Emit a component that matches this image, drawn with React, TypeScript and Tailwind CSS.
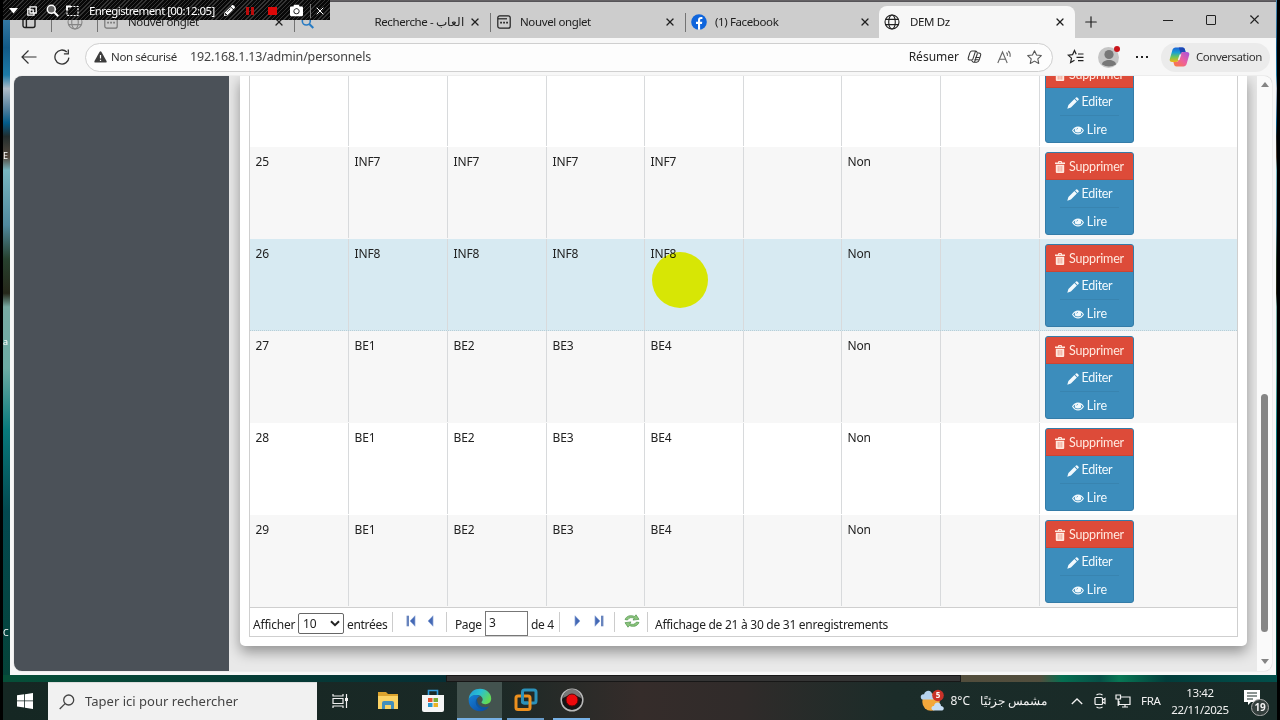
import type { ReactNode } from "react";
import { FaPencilAlt, FaCamera } from "react-icons/fa";
import { X, Plus } from "lucide-react";

const S = { fill: "none", stroke: "currentColor" } as const;

function GlobeIcon({ className = "" }: { className?: string }) {
  return (
    <svg className={className} width="16" height="16" viewBox="0 0 16 16" {...S} strokeWidth="1.1">
      <circle cx="8" cy="8" r="7" />
      <ellipse cx="8" cy="8" rx="3.3" ry="7" />
      <path d="M1.6 5.4h12.8M1.6 10.6h12.8" />
    </svg>
  );
}

function NewTabIcon({ className = "" }: { className?: string }) {
  return (
    <svg className={className} width="14" height="14" viewBox="0 0 14 14" {...S} strokeWidth="1.2">
      <rect x="0.8" y="0.8" width="12.4" height="12.4" rx="2" />
      <path d="M1 3.8h9" />
      <path d="M3.2 7.7h1.7M6.2 7.7h1.7M9.2 7.7h1.7" strokeWidth="1.7" />
    </svg>
  );
}

function FacebookIcon() {
  return (
    <svg width="16" height="16" viewBox="0 0 16 16">
      <circle cx="8" cy="8" r="7.8" fill="#0f65dc" />
      <path d="M7 15.7V10H5V7.8h2V6.2C7 4.1 8.2 3 10.1 3h1.3v2h-1c-1 0-1.3.5-1.3 1.2v1.6h2.2L10.9 10H9.1v5.7z" fill="#fff" />
    </svg>
  );
}

function Separator() {
  return <div className="h-[19px] w-px shrink-0 bg-[#737373]" />;
}

function Tab({ icon, label, width, labelClass = "pl-[2px]" }: { icon: ReactNode; label: string; width: string; labelClass?: string }) {
  return (
    <div className={`flex shrink-0 items-center ${width}`}>
      <div className="-ml-px flex w-[27px] shrink-0 items-center justify-center">{icon}</div>
      <div className={`grow whitespace-nowrap text-[11.5px] tracking-[-0.38px] ${labelClass}`}>{label}</div>
      <X size={12} strokeWidth={2.6} className="mr-[9px] shrink-0" />
    </div>
  );
}

function TabStrip() {
  return (
    <div className="flex h-[37px] items-end border-t border-[#565458] bg-[#cdcdcd] text-[#202020]">
      <div className="flex h-[32px] shrink-0 items-center">
        <div className="flex w-[41px] items-center justify-center pr-[4px]">
          <svg width="14" height="14" viewBox="0 0 14 14" {...S} strokeWidth="1.4">
            <rect x="1" y="1" width="12" height="11.5" rx="2" />
            <path d="M1 4h12M4.4 4v8" />
          </svg>
        </div>
        <Separator />
        <div className="flex w-[45px] items-center justify-center"><GlobeIcon className="text-[#858585]" /></div>
        <Separator />
        <Tab width="w-[196px]" icon={<NewTabIcon className="text-[#777]" />} label="Nouvel onglet" labelClass="pl-[4px]" />
        <Separator />
        <Tab
          width="w-[195px]"
          icon={<svg width="13" height="13" viewBox="0 0 13 13" fill="none" stroke="#287bc3" strokeWidth="1.6"><circle cx="5.3" cy="5" r="4" /><path d="M8.3 8l4 4" strokeWidth="2" /></svg>}
          label="Recherche - العاب"
          labelClass="text-right pr-[5px]"
        />
        <Separator />
        <Tab width="w-[194px]" icon={<NewTabIcon />} label="Nouvel onglet" labelClass="pl-[3px]" />
        <Separator />
        <Tab width="w-[194px]" icon={<FacebookIcon />} label="(1) Facebook" labelClass="pl-[3px]" />
      </div>
      <div className="-ml-px flex h-[32px] w-[196px] shrink-0 items-center rounded-t-lg bg-[#f7f7f7]">
        <Tab width="w-[196px]" icon={<GlobeIcon />} label="DEM Dz" labelClass="pl-[5px]" />
      </div>
      <div className="flex h-[32px] grow items-center">
        <Plus size={18} strokeWidth={1.6} className="ml-[7px]" />
        <div className="mb-[3px] ml-[63px] h-px w-[10px] bg-[#222]" />
        <div className="mb-[5px] ml-[33px] h-[10px] w-[10px] rounded-[1px] border border-[#222]" />
        <X size={15} strokeWidth={1.7} className="mb-[5px] ml-[31px]" />
      </div>
    </div>
  );
}

const STAR = "M8 1.6l1.9 4.1 4.5.5-3.3 3 .9 4.4L8 11.4l-4 2.2.9-4.4-3.3-3 4.5-.5z";

function CopilotIcon() {
  return (
    <svg width="21" height="20" viewBox="0 0 21 20">
      <defs>
        <linearGradient id="cp1" x1="0" y1="0" x2="0" y2="1">
          <stop offset="0" stopColor="#1c63d8" /><stop offset=".35" stopColor="#18a0d3" /><stop offset=".65" stopColor="#6cc65a" /><stop offset="1" stopColor="#f2b413" />
        </linearGradient>
        <linearGradient id="cp2" x1="1" y1="0" x2="0" y2="1">
          <stop offset="0" stopColor="#a352e0" /><stop offset=".5" stopColor="#ed5f9e" /><stop offset="1" stopColor="#fb7d35" />
        </linearGradient>
      </defs>
      <path d="M6.500.5h7c1.500 0 2 .8 2.400 2l.7 2.500h-2.500c-1.300 0-2 .7-2.400 2l-1.900 6c-.4 1.300-1.300 2-2.600 2H3.200C1 15 .3 13.500.8 12l2.600-9C3.800 1.400 5 .5 6.500.5z" fill="url(#cp1)" />
      <path d="M9.800.5h3.700c1.500 0 2 .8 2.400 2l.7 2.500h-2.500c-1.300 0-2 .7-2.300 1.700z" fill="#1e47b4" />
      <path d="M14.500 19.500h-7c-1.500 0-2-.8-2.400-2L4.400 15h2.800c1.300 0 2.200-.7 2.600-2l1.900-6c.4-1.300 1.100-2 2.400-2h3.700c2.200 0 2.900 1.500 2.400 3l-2.600 9c-.4 1.600-1.600 2.500-3.100 2.500z" fill="url(#cp2)" />
      <path d="M10.600 7.500h1.700l-1.900 5.500H8.800z" fill="#f2eef0" />
    </svg>
  );
}

function Toolbar() {
  return (
    <div className="flex h-[38px] items-center bg-[#f7f7f7] text-[#333]">
      <svg width="16" height="16" viewBox="0 0 16 16" {...S} strokeWidth="1.2" className="ml-[11px]"><path d="M15.500 8H1M7.500 1.500L1 8l6.500 6.500" /></svg>
      <svg width="16" height="16" viewBox="0 0 16 16" {...S} strokeWidth="1.3" className="ml-[17px]"><path d="M14.900 8.600A7 7 0 1 1 12.800 3M14.300.5v4.400H9.900" /></svg>
      <div className="ml-[15px] flex h-[29px] w-[968px] shrink-0 items-center rounded-full border border-[#cfcfcf] bg-[#fdfdfd] pl-[8px]">
        <svg width="13" height="12" viewBox="0 0 13 12"><path d="M5.500 1q1-1.500 2 0l5 9q.5 1.500-1 1.500h-10q-1.500 0-1-1.500z" fill="#3d3d3d" /><path d="M6.500 4v3.500M6.500 8.700v1.200" stroke="#fff" strokeWidth="1.200" /></svg>
        <span className="ml-[4px] w-[79px] whitespace-nowrap text-[11.500px] tracking-[-0.360px]">Non sécurisé</span>
        <span className="whitespace-nowrap pt-px text-[12.500px] tracking-[-0.180px] text-[#444]">192.168.1.13/admin/personnels</span>
        <span className="ml-auto text-[12px] text-[#262626]">Résumer</span>
        <svg width="15" height="16" viewBox="0 0 16 16" {...S} strokeWidth="1.100" className="ml-[8px]">
          <path d="M5 1.500h4c1.500 0 1.700 1 2 2.200h1.500c2 0 2.500 1.200 2 2.600l-1.600 5c-.5 1.500-1.300 2.200-2.600 2.200H7c-1.500 0-1.700-1-2-2.200H3.200c-1.700 0-2.200-1.100-1.800-2.500l1.500-5C3.400 2.300 4 1.500 5 1.500zM9 2L6 11M11 4.500l-3 9" />
          <path d="M9 8.500h4.500M8 11h4.500" />
        </svg>
        <svg width="15" height="15" viewBox="0 0 15 15" {...S} strokeWidth="1.100" className="ml-[15px] text-[#666]"><path d="M.8 13L5.500 2l4.700 11M2.400 9.300h6.200M9.500 2.500c1 .9 1.100 2 .9 3.300M11.300 1c1.800 1.500 2.200 3.400 1.700 5.800" /></svg>
        <svg width="17" height="17" viewBox="0 0 16 16" {...S} strokeWidth="1" className="ml-[14px] mr-[9px] text-[#555]"><path d={STAR} strokeLinejoin="round" /></svg>
      </div>
      <svg width="17" height="16" viewBox="0 0 17 16" {...S} strokeWidth="1.200" className="ml-[14px] text-[#222]"><path d="M9.200 5.300L7.500 1.500 5.600 5.600l-4.400.5 3.300 3L3.600 13.500l3.900-2.200M11 5h5.500M9.500 8.300h7M11 11.700h5.500" /></svg>
      <div className="relative ml-[14px] flex h-[21px] w-[21px] shrink-0 items-center justify-center rounded-full bg-[#c5c5c5]">
        <svg width="20" height="20" viewBox="0 0 20 20" fill="#777"><circle cx="10" cy="7.500" r="4.600" /><path d="M3 17.500c0-6 14-6 14 0q-7 4-14 0z" /></svg>
        <span className="absolute -right-[1px] -top-[1px] h-[6px] w-[6px] rounded-full bg-[#c9151b]" />
      </div>
      <div className="ml-[17px] flex w-[12px] shrink-0 justify-between"><i className="h-[2px] w-[2px] bg-[#222]" /><i className="h-[2px] w-[2px] bg-[#222]" /><i className="h-[2px] w-[2px] bg-[#222]" /></div>
      <div className="ml-[13px] flex h-[29px] w-[109px] shrink-0 items-center rounded-full bg-[#ebebeb] pl-[8px]">
        <CopilotIcon />
        <span className="ml-[6px] text-[11.500px] tracking-[-0.480px]">Conversation</span>
      </div>
    </div>
  );
}

const ROWS: string[][] = [
  ["", "", "", "", "", "", "", ""],
  ["25", "INF7", "INF7", "INF7", "INF7", "", "Non", ""],
  ["26", "INF8", "INF8", "INF8", "INF8", "", "Non", ""],
  ["27", "BE1", "BE2", "BE3", "BE4", "", "Non", ""],
  ["28", "BE1", "BE2", "BE3", "BE4", "", "Non", ""],
  ["29", "BE1", "BE2", "BE3", "BE4", "", "Non", ""],
];

function TrashIcon() {
  return (
    <svg width="10" height="12" viewBox="0 0 10 12" className="mb-px shrink-0">
      <path d="M0 1.500h3V.9Q3 0 4 0h2q1 0 1 .9v.6h3v1.600H0zM4 1.500h2V1H4z" fill="currentColor" />
      <path d="M.8 3.800h8.400V11q0 1-1 1H1.800q-1 0-1-1z" fill="currentColor" />
      <path d="M3.200 5v5.500M5 5v5.500M6.800 5v5.500" stroke="#dd4b39" strokeWidth=".45" />
    </svg>
  );
}

function PencilIcon() {
  return (
    <svg width="12" height="12" viewBox="0 0 12 12" fill="currentColor" className="shrink-0">
      <path d="M9 .5q.6-.6 1.300 0l1.200 1.200q.6.700 0 1.300l-.9.900L8.100 1.400zM7.400 2.100l2.500 2.500-6 6L.3 11.700l1.100-3.600z" />
    </svg>
  );
}

function EyeIcon() {
  return (
    <svg width="12" height="9" viewBox="0 0 12 9" className="shrink-0">
      <path d="M0 4.500Q2.300.6 6 .6t6 3.900Q9.700 8.400 6 8.400T0 4.500z" fill="currentColor" />
      <path d="M3.300 2.400Q1.900 3.200 1.200 4.500 3 7.300 6 7.300t4.800-2.800q-.7-1.300-2.100-2.100 1.800 3.900-2.700 4-4.500-.1-2.700-4z" fill="#3c8dbc" />
      <path d="M4.600 3.600q.1-1.200 1.400-1.300" fill="none" stroke="#3c8dbc" strokeWidth=".6" />
    </svg>
  );
}

function Actions() {
  return (
    <div className="h-[83px] w-[89px] overflow-hidden rounded-[3px] border border-[#347ca8] bg-[#3c8dbc] font-[Lato,sans-serif] text-[12.500px] text-[#f2f9fd]">
      <div className="-mx-px -mt-px flex h-[28px] items-center justify-center gap-[4px] border border-[#cb4433] bg-[#dd4b39] pt-[2px] tracking-[-0.200px] text-[#ffe9df]"><TrashIcon />Supprimer</div>
      <div className="flex h-[27px] items-center justify-center gap-[3px] pt-[2px] tracking-[-0.300px]"><PencilIcon />Editer</div>
      <div className="mx-[14px] h-px bg-[#3884b0]" />
      <div className="flex h-[27px] items-center justify-center gap-[3px] pt-px"><EyeIcon />Lire</div>
    </div>
  );
}

function Row({ cells, index }: { cells: string[]; index: number }) {
  const bg = index === 2 ? "bg-[#d7eaf2] border-dotted border-[#b9ced6]" : index % 2 ? "bg-[#f7f7f7] border-transparent" : "bg-white border-transparent";
  return (
    <div className={`grid h-[92px] shrink-0 grid-cols-[99px_99px_99px_98px_99px_98px_99px_99px_1fr] border-b ${bg}`}>
      {cells.map((c, i) => (
        <div key={i} className="border-r border-[#d8dadc] pl-[5.500px] pt-[6px] leading-[18px] tracking-[-0.150px] text-[#222]">{c}</div>
      ))}
      <div className="pl-[5px] pt-[5px]"><Actions /></div>
    </div>
  );
}

function Arrow({ left = false, bar = false }: { left?: boolean; bar?: boolean }) {
  return (
    <svg width="12" height="12" viewBox="0 0 12 12" className={left ? "rotate-180" : ""}>
      <path d="M2 .8v10.400L7 6z" fill="#4569b5" stroke="#89a3d6" strokeWidth=".7" />
      {bar && <rect x="8" y=".7" width="2.400" height="10.600" fill="#6884bd" />}
    </svg>
  );
}

function Pager() {
  return (
    <div className="flex h-[30px] shrink-0 items-center whitespace-nowrap border-y border-[#cfcfcf] bg-white pl-[3px] text-[#222]">
      <span className="w-[45px] pt-[6px] tracking-[-0.200px]">Afficher</span>
      <div className="mt-[3px] flex h-[21px] w-[46px] items-center justify-between rounded-[2px] border border-[#666] pl-[4px] pr-[3px]">
        10<svg width="10" height="7" viewBox="0 0 10 7" {...S} strokeWidth="2"><path d="M1 1.200l4 4 4-4" /></svg>
      </div>
      <span className="ml-[3px] w-[45px] pt-[6px] tracking-[-0.300px]">entrées</span>
      <div className="h-[20px] w-px bg-[#ccc]" />
      <div className="ml-[12px] flex gap-[7px] pb-[3px]"><Arrow left bar /><span className="-ml-px"><Arrow left /></span></div>
      <div className="ml-[11px] h-[20px] w-px bg-[#ccc]" />
      <span className="ml-[8px] w-[29px] pt-[6px] tracking-[-0.400px]">Page</span>
      <div className="ml-px mt-[2px] flex h-[25px] w-[43px] items-center border border-[#777] pl-[3px]">3</div>
      <span className="ml-[3px] w-[28px] pt-[6px] tracking-[-0.300px]">de 4</span>
      <div className="h-[20px] w-px bg-[#ccc]" />
      <div className="ml-[13px] flex gap-[8px] pb-[3px]"><Arrow /><Arrow bar /></div>
      <div className="ml-[9px] h-[20px] w-px bg-[#ccc]" />
      <svg width="16" height="14" viewBox="0 0 16 14" className="mb-[3px] ml-[9px]" fill="#8bc37b" stroke="#4d944b" strokeWidth=".7">
        <path d="M1 5.500C2.500 1.700 7 .7 10.500 2.500L12 .8l3 4.500-6 .8 1.200-1.800C7.500 3 5 3.500 3.500 6z" />
        <path d="M15 8.500c-1.500 3.800-6 4.800-9.500 3L4 13.200 1 8.700l6-.8-1.200 1.800c2.700 1.300 5.200.8 6.700-1.700z" />
      </svg>
      <div className="ml-[7px] h-[20px] w-px bg-[#ccc]" />
      <span className="ml-[7px] pt-[6px] tracking-[-0.270px]">Affichage de 21 à 30 de 31 enregistrements</span>
    </div>
  );
}

function Page() {
  return (
    <div className="mx-[4px] flex h-[595px] overflow-hidden rounded-lg bg-[#e9e9e9] shadow-[0_0_1px_#999]">
      <aside className="w-[215px] shrink-0 bg-[#4b5158]" />
      <main className="flex min-w-0 grow flex-col overflow-hidden bg-[#e9e9e9] pl-[11px] pr-[10px]">
        <div className="flex h-[570px] flex-col rounded-b-[5px] bg-white px-[9px] shadow-[0_6px_14px_rgba(0,0,0,0.38)]">
          <div className="flex h-[561px] w-[989px] flex-col justify-end overflow-hidden border-x border-[#cfcfcf] text-[12px]">
            {ROWS.map((r, i) => <Row key={i} cells={r} index={i} />)}
            <Pager />
          </div>
        </div>
      </main>
      <div className="flex w-[15px] shrink-0 flex-col items-center bg-[#fafafa]">
        <svg width="8" height="5" viewBox="0 0 8 5" className="mt-[6px]"><path d="M4 0l4 5H0z" fill="#858585" /></svg>
        <div className="mt-[307px] h-[238px] w-[7px] rounded-full bg-[#858585]" />
        <svg width="8" height="5" viewBox="0 0 8 5" className="mt-[27px]"><path d="M4 5l4-5H0z" fill="#858585" /></svg>
      </div>
    </div>
  );
}

function Recorder() {
  return (
    <div className="absolute left-[3px] top-0 flex h-[20px] w-[327px] items-center bg-[repeating-linear-gradient(135deg,#080808_0px,#080808_2px,#343434_2px,#343434_3px)] pt-px text-white">
      <svg width="9" height="6" viewBox="0 0 9 6" className="ml-[6px]"><path d="M0 0h9L4.500 5.500z" fill="#fff" /></svg>
      <svg width="10" height="10" viewBox="0 0 10 10" {...S} strokeWidth="1.300" className="ml-[9px]"><path d="M3 .8h6.200V7H3zM3 3H.8v6.200H7V7M3 3.800h3.200V7" /></svg>
      <svg width="13" height="13" viewBox="0 0 13 13" {...S} strokeWidth="1.500" className="ml-[9px]"><circle cx="5.300" cy="5.300" r="4" fill="#666" /><path d="M8.200 8.200l4 4" strokeWidth="2" /></svg>
      <svg width="13" height="12" viewBox="0 0 13 12" {...S} strokeWidth="1.200" className="ml-[7px]"><rect x="1" y="1.500" width="11" height="9" strokeDasharray="2 1.200" /><path d="M1 5V1.500h4" strokeWidth="1.800" /></svg>
      <span className="ml-[10px] w-[135px] whitespace-nowrap text-[11.500px] tracking-[-0.570px]">Enregistrement [00:12:05]</span>
      <FaPencilAlt size={11} />
      <div className="ml-[11px] flex gap-[2px]"><i className="h-[8px] w-[3px] bg-[#bd0b0b]" /><i className="h-[8px] w-[3px] bg-[#bd0b0b]" /></div>
      <div className="ml-[14px] h-[8px] w-[9px] bg-[#dc0808]" />
      <FaCamera size={13} className="ml-[13px]" />
      <div className="ml-[7px] h-[14px] w-px bg-[#777]" />
      <X size={12} strokeWidth={2} className="ml-[3px]" />
    </div>
  );
}

function EdgeIcon() {
  return (
    <svg width="24" height="24" viewBox="0 0 24 24">
      <defs>
        <linearGradient id="eg1" x1="0" y1="0" x2="1" y2=".5"><stop offset="0" stopColor="#2398d5" /><stop offset=".5" stopColor="#29c0d2" /><stop offset="1" stopColor="#62d957" /></linearGradient>
        <linearGradient id="eg2" x1="0" y1="0" x2="1" y2="1"><stop offset="0" stopColor="#1582d6" /><stop offset="1" stopColor="#0b469d" /></linearGradient>
      </defs>
      <path d="M.8 10C2 4 6.500.8 12 .8c6.500 0 11.200 4.700 11.200 9.700 0 3.700-2.700 5.700-5.700 5.700-2.600 0-4-.9-4-1.900 0-.8 1.200-1.100 1.200-3 0-2-2-4.400-5.700-4.400C4.500 6.900 1.500 9 .8 12z" fill="url(#eg1)" />
      <path d="M.7 12C1.300 8.700 4.600 7 8.300 7c1.500 0 2.700.3 3.700.9-2.500 1-3.600 3.300-3.600 5.800 0 3.700 3 6.100 7 6.100 2.100 0 4-.5 5.500-1.300-2 3-5 4.700-9 4.700C5.300 23.200.4 18 .7 12z" fill="url(#eg2)" />
      <path d="M9 10.500c-2.500 3-1.500 8.500 4 10.300 3 .7 6-.6 7.900-2.300-6 2-12 0-11.900-8z" fill="#0d559e" />
    </svg>
  );
}

function Taskbar() {
  return (
    <div className="ml-[3px] mr-[3px] flex h-[38px] items-stretch bg-[linear-gradient(90deg,#152723_0%,#1a2926_38%,#352c2a_50%,#302b2a_58%,#1b2c29_70%,#182a27_100%)] text-[#f1f1f1]">
      <div className="flex w-[45px] shrink-0 items-center justify-center">
        <svg width="16" height="16" viewBox="0 0 16 16" fill="#fff" className="mr-[1px]"><path d="M0 2.300l7.200-1v6.200H0zM8 1.200L16 0v7.500H8zM0 8.300h7.200v6.300L0 13.600zM8 8.300h8V16l-8-1.200z" /></svg>
      </div>
      <div className="flex w-[269px] shrink-0 items-center border-t border-[#ddd] bg-[#f1f1f1] text-[#444]">
        <svg width="16" height="16" viewBox="0 0 16 16" {...S} strokeWidth="1.300" className="ml-[11px]"><circle cx="9.700" cy="6" r="5" /><path d="M6.100 9.600L.7 15" /></svg>
        <span className="ml-[10px] text-[13px] tracking-[0.020px]">Taper ici pour rechercher</span>
      </div>
      <div className="flex w-[46px] shrink-0 items-center justify-center">
        <svg width="16" height="16" viewBox="0 0 16 16" {...S} strokeWidth="1.200"><path d="M1 1v2h10V1M1 15v-2h10v2M1 5.500h10v5H1zM14.500 1v14" /><path d="M13 5h3v3h-3z" fill="currentColor" stroke="none" /></svg>
      </div>
      <div className="flex w-[46px] shrink-0 items-center justify-center pl-[3px]">
        <svg width="22" height="20" viewBox="0 0 22 20"><path d="M1 1h8l2 2h10v14H1z" fill="#dba32e" /><path d="M1 5h20v13H1z" fill="#fbd365" /><path d="M5 18v-6q0-2 2-2h8q2 0 2 2v6h-3v-4H8v4z" fill="#438fbc" /></svg>
      </div>
      <div className="ml-px flex w-[46px] shrink-0 items-center justify-center">
        <svg width="24" height="24" viewBox="0 0 24 24"><path d="M7.500 7V1.500h9V7" fill="none" stroke="#329bda" strokeWidth="1.600" /><path d="M1 6h22v15q0 2-2 2H3q-2 0-2-2z" fill="#f4f5f5" /><path d="M7 9h4.500v4H7z" fill="#e6522f" /><path d="M12.500 9H17v4h-4.500z" fill="#7aac36" /><path d="M7 14h4.500v4H7z" fill="#2797cf" /><path d="M12.500 14H17v4h-4.500z" fill="#ecb323" /></svg>
      </div>
      <div className="ml-px flex w-[45px] shrink-0 items-center justify-center border-b-2 border-[#77b1e5] bg-[#43534f]"><EdgeIcon /></div>
      <div className="ml-[5px] flex w-[37px] shrink-0 items-center justify-center border-b-2 border-[#689bc8]">
        <svg width="24" height="24" viewBox="0 0 24 24" fill="none" strokeWidth="3"><rect x="8.500" y="2" width="13.500" height="13" rx="2" stroke="#2b91ba" /><rect x="2" y="8" width="14" height="13.500" rx="2" stroke="#ed901e" /><path d="M8.500 6v7q0 2 2 2H14" stroke="#2b91ba" /></svg>
      </div>
      <div className="ml-[9px] flex w-[37px] shrink-0 items-center justify-center border-b-2 border-[#77b1e5]">
        <svg width="24" height="24" viewBox="0 0 24 24"><circle cx="12" cy="12" r="10.800" fill="#151515" stroke="#b9b9b9" strokeWidth="1.500" /><path d="M3 10a9 9 0 0 1 18 0q-9-6-18 0z" fill="#777" /><circle cx="12" cy="12" r="6" fill="#ed090c" stroke="#5f0505" /></svg>
      </div>
      <div className="flex grow items-center justify-end whitespace-nowrap">
        <svg width="25" height="24" viewBox="0 0 25 24"><circle cx="11" cy="13" r="8.700" fill="#f3a73b" /><path d="M2 10.500c-3-3 0-6 2-5 1-5 8-5 8 0 3 1 3 5 0 5z" fill="#b6d3ef" /><path d="M13 21.500c-3-2-1-5 1-4.500 1-5 7-4 7 0 3 0 4 4 1 4.500z" fill="#c8def5" /><circle cx="18" cy="6.500" r="5.800" fill="#c93229" /><text x="18" y="9.300" textAnchor="middle" fontFamily="Noto Sans" fontSize="8" fontWeight="700" fill="#fff">5</text></svg>
        <span className="ml-[5px] text-[12px]">8°C</span>
        <span dir="rtl" className="ml-[8px] w-[69px] text-[12px]">مشمس جزئيًا</span>
        <svg width="12" height="7" viewBox="0 0 12 7" {...S} strokeWidth="1.300" className="ml-[24px]"><path d="M.8 6L6 1l5.200 5" /></svg>
        <svg width="12" height="16" viewBox="0 0 12 16" {...S} strokeWidth="1.200" className="ml-[11px]"><rect x="1" y="4.500" width="7.500" height="7" rx="1" /><path d="M8.500 7l2.500-1.500v5L8.500 9M2.500 2q3-2 6 0M2.500 14q3 2 6 0" /></svg>
        <svg width="16" height="14" viewBox="0 0 16 14" {...S} strokeWidth="1.200" className="ml-[9px]"><path d="M5 3h10v7.500H4V7M7 13h6M10 10.500V13M1 1h4.500v4H1zM3.200 5v7" /></svg>
        <span className="ml-[10px] w-[20px] text-[11.500px] tracking-[-0.300px]">FRA</span>
        <div className="ml-[9px] flex w-[60px] flex-col items-center text-[11.500px] leading-[17px] tracking-[-0.360px]"><span>13:42</span><span>22/11/2025</span></div>
        <div className="relative ml-[14px] mr-[8px] h-[24px] w-[25px] shrink-0">
          <svg width="16" height="16" viewBox="0 0 16 16"><path d="M0 1h16v12H7l-3 3v-3H0z" fill="#fff" /><path d="M3 4h10M3 7h10M3 10h6" stroke="#1b2c29" /></svg>
          <span className="absolute -bottom-[3px] right-0 flex h-[17px] w-[18px] items-center justify-center rounded-full border border-[#aaa] bg-[#343f3d] text-[10px] font-bold tracking-tight">19</span>
        </div>
      </div>
    </div>
  );
}

export default function App() {
  return (
    <div className="relative flex h-[720px] w-[1280px] flex-col overflow-hidden bg-black font-['Noto_Sans',sans-serif]">
      <div className="mx-[3px] flex h-[682px] shrink-0 flex-col bg-[linear-gradient(180deg,#4c8fb7_0%,#125a87_7%,#1d7ba7_11%,#aebbc8_13%,#517f9d_16%,#035d8b_18%,#222d2d_20%,#54483d_23%,#78b7c1_25%,#50899e_33%,#27412e_38%,#252719_43%,#78aaa3_45%,#6caba3_54%,#087a7c_63%,#034950_75%,#054338_100%)]">
        <div className="flex h-[675px] shrink-0">
          <div className="flex w-[7px] shrink-0 flex-col overflow-hidden text-[9px] leading-[12px] text-white">
            <span className="pt-[150px]">E</span>
            <span className="pt-[174px]">a</span>
            <span className="pt-[279px]">C</span>
          </div>
          <div className="flex h-[675px] w-[1266px] flex-col border-t border-[#646164] bg-[#f7f7f7]">
            <TabStrip />
            <Toolbar />
            <Page />
          </div>
        </div>
        <div className="flex h-[7px]">
          <div className="w-[443px] bg-[linear-gradient(90deg,#064f38,#062f35)]" />
          <div className="w-[515px] border border-[#171717] bg-[#343434]" />
          <div className="grow bg-[linear-gradient(90deg,#524d3c,#524e3d_25%,#056f51_32%,#075047_44%,#087855_50%,#023d3b_65%,#02504b)]" />
        </div>
      </div>
      <Taskbar />
      <Recorder />
      <div className="absolute left-[652px] top-[252px] h-[56px] w-[56px] rounded-full bg-[#fffb05] mix-blend-multiply" />
    </div>
  );
}
